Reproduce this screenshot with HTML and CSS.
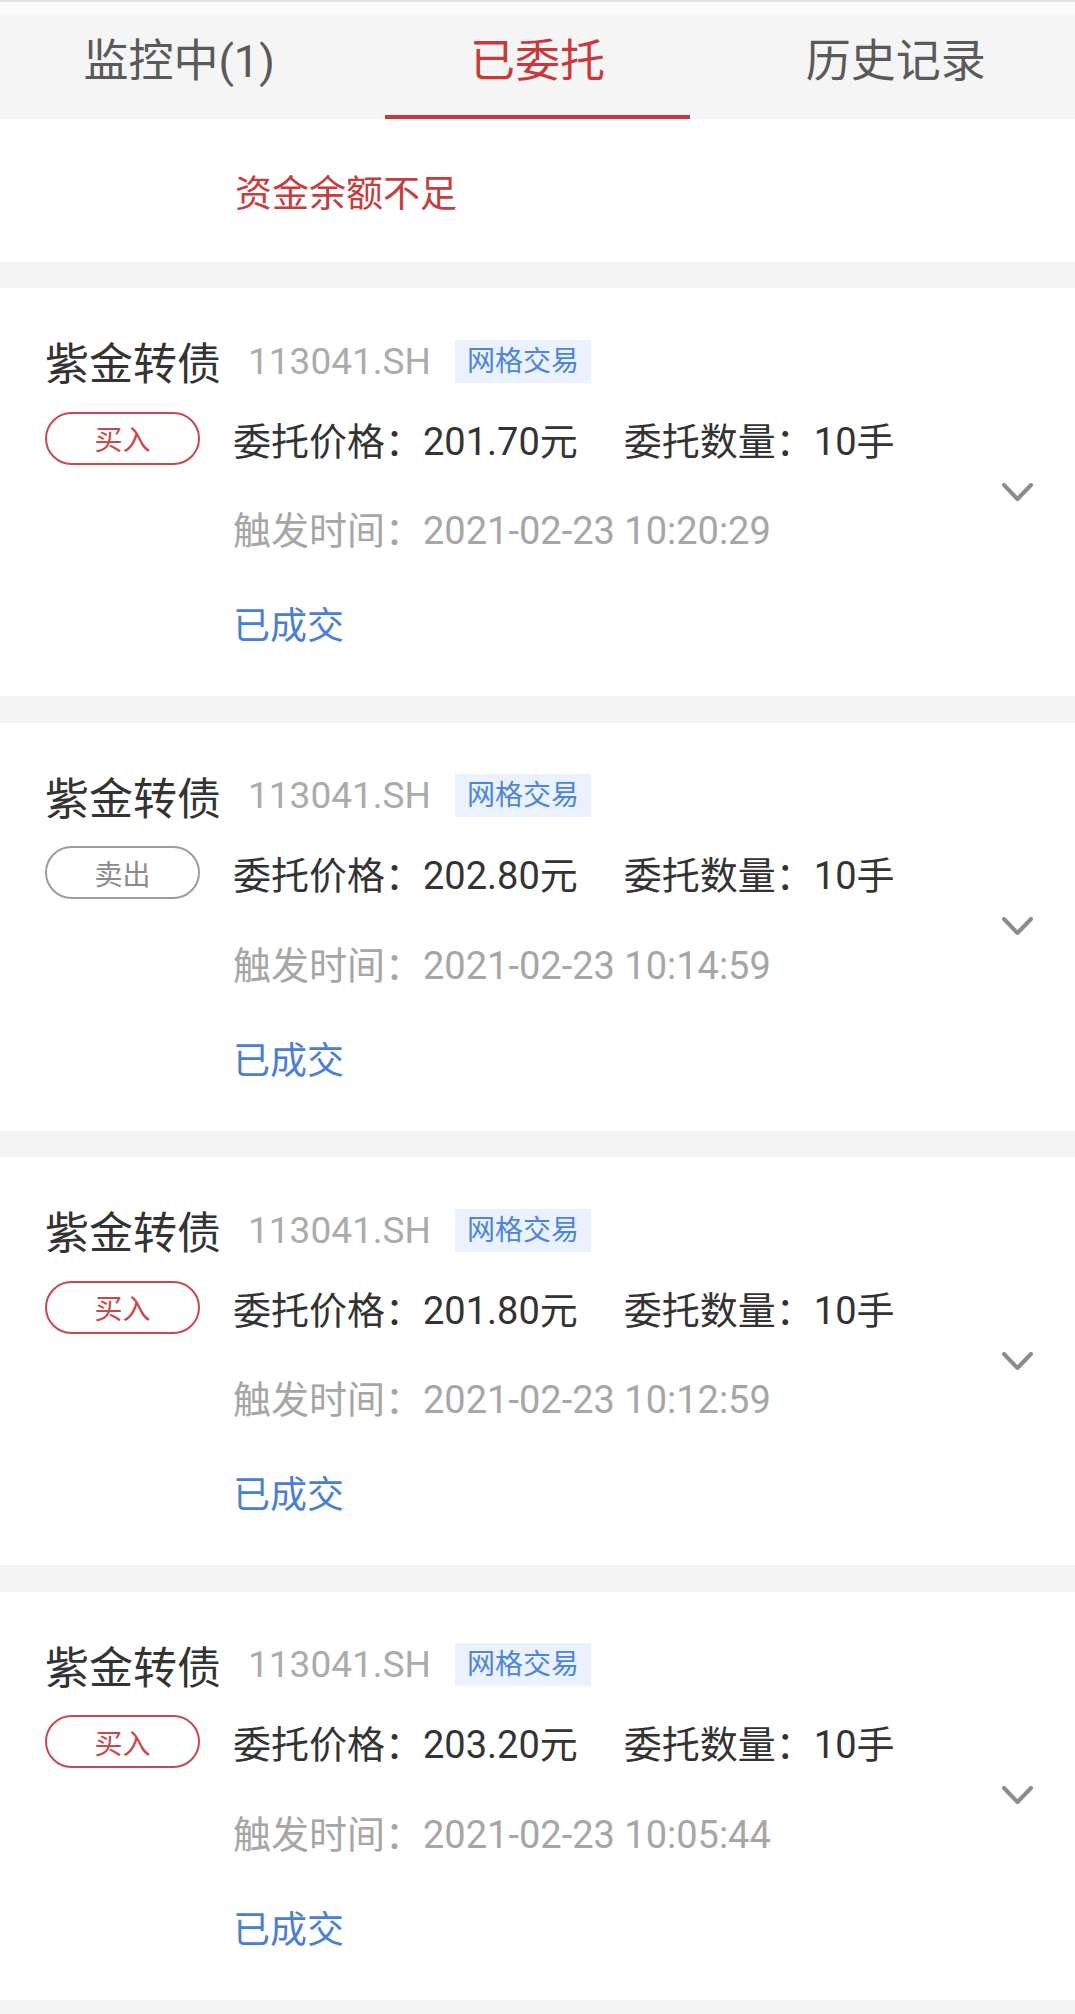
FILE: index.html
```html
<!DOCTYPE html>
<html lang="zh-CN">
<head>
<meta charset="utf-8">
<title>已委托</title>
<link rel="stylesheet" href="styles.css">
</head>
<body>
<nav class="tabs">
  <div class="tab"><span class="tab-label">监控中(1)</span><span class="tab-bar"></span></div>
  <div class="tab active"><span class="tab-label">已委托</span><span class="tab-bar"></span></div>
  <div class="tab"><span class="tab-label">历史记录</span><span class="tab-bar"></span></div>
</nav>

<section class="notice">资金余额不足</section>

<section class="card">
  <div class="card-body">
    <div class="row-title"><span class="name">紫金转债</span><span class="code">113041.SH</span><span class="tag">网格交易</span></div>
    <div class="row-price"><span class="pill buy">买入</span><span class="val">委托价格：201.70元</span><span class="val qty">委托数量：10手</span></div>
    <div class="row-time">触发时间：2021-02-23 10:20:29</div>
    <div class="row-status">已成交</div>
  </div>
  <svg class="chev" width="31" height="19" viewBox="0 0 31 19"><polyline points="2,2 15.5,16 29,2" fill="none" stroke="#8c8c8c" stroke-width="4" stroke-linecap="round" stroke-linejoin="round"/></svg>
</section>

<section class="card">
  <div class="card-body">
    <div class="row-title"><span class="name">紫金转债</span><span class="code">113041.SH</span><span class="tag">网格交易</span></div>
    <div class="row-price"><span class="pill sell">卖出</span><span class="val">委托价格：202.80元</span><span class="val qty">委托数量：10手</span></div>
    <div class="row-time">触发时间：2021-02-23 10:14:59</div>
    <div class="row-status">已成交</div>
  </div>
  <svg class="chev" width="31" height="19" viewBox="0 0 31 19"><polyline points="2,2 15.5,16 29,2" fill="none" stroke="#8c8c8c" stroke-width="4" stroke-linecap="round" stroke-linejoin="round"/></svg>
</section>

<section class="card">
  <div class="card-body">
    <div class="row-title"><span class="name">紫金转债</span><span class="code">113041.SH</span><span class="tag">网格交易</span></div>
    <div class="row-price"><span class="pill buy">买入</span><span class="val">委托价格：201.80元</span><span class="val qty">委托数量：10手</span></div>
    <div class="row-time">触发时间：2021-02-23 10:12:59</div>
    <div class="row-status">已成交</div>
  </div>
  <svg class="chev" width="31" height="19" viewBox="0 0 31 19"><polyline points="2,2 15.5,16 29,2" fill="none" stroke="#8c8c8c" stroke-width="4" stroke-linecap="round" stroke-linejoin="round"/></svg>
</section>

<section class="card">
  <div class="card-body">
    <div class="row-title"><span class="name">紫金转债</span><span class="code">113041.SH</span><span class="tag">网格交易</span></div>
    <div class="row-price"><span class="pill buy">买入</span><span class="val">委托价格：203.20元</span><span class="val qty">委托数量：10手</span></div>
    <div class="row-time">触发时间：2021-02-23 10:05:44</div>
    <div class="row-status">已成交</div>
  </div>
  <svg class="chev" width="31" height="19" viewBox="0 0 31 19"><polyline points="2,2 15.5,16 29,2" fill="none" stroke="#8c8c8c" stroke-width="4" stroke-linecap="round" stroke-linejoin="round"/></svg>
</section>
</body>
</html>
```

FILE: styles.css
```css
* { box-sizing: border-box; }

html, body {
  margin: 0;
  padding: 0;
}

body {
  background: #f4f4f4;
  font-family: Roboto, "Noto Sans CJK SC", sans-serif;
  color: #333;
}

/* Tabs */
.tabs {
  display: grid;
  grid-template-columns: 1fr 1fr 1fr;
  height: 119px;
  background: linear-gradient(#fbfbfb 0, #fbfbfb 12px, #f5f5f5 14px);
  border-top: 2px solid #e3e3e3;
}

.tab {
  display: flex;
  flex-direction: column;
  align-items: center;
}

.tab-label {
  margin-top: 20px;
  height: 80px;
  line-height: 80px;
  font-size: 45px;
  color: #5a5a5a;
}

.tab-bar {
  margin-top: auto;
  width: 305px;
  height: 4px;
}

.tab.active .tab-label { color: #c9393b; }
.tab.active .tab-bar { background: #c9393b; }

/* Notice */
.notice {
  height: 143px;
  background: #fff;
  display: flex;
  align-items: center;
  padding-left: 235px;
  font-size: 37px;
  color: #c73c3d;
  margin-bottom: 26px;
}

/* Cards */
.card {
  height: 408px;
  background: #fff;
  display: flex;
  padding: 0 42px 0 45px;
  margin-bottom: 26.6px;
}

.card-body {
  flex: 1;
  display: flex;
  flex-direction: column;
  padding-top: 33px;
}

.chev {
  align-self: center;
  flex: none;
}

.row-title {
  height: 80px;
  display: flex;
  align-items: center;
}

.name {
  font-size: 44px;
  color: #333;
}

.code {
  font-size: 37px;
  color: #ababab;
  margin-left: 27px;
}

.tag {
  margin-left: 24px;
  height: 43px;
  line-height: 43px;
  padding: 0 12px;
  background: #ebf2fd;
  color: #4d86d6;
  font-size: 28px;
}

.row-price {
  margin-top: 7px;
  height: 60px;
  display: flex;
  align-items: center;
}

.pill {
  width: 155px;
  height: 53px;
  border: 2px solid;
  border-radius: 27px;
  display: flex;
  align-items: center;
  justify-content: center;
  font-size: 28px;
  margin-right: 33px;
  flex: none;
}

.pill.buy { border-color: #c9484b; color: #c9484b; }
.pill.sell { border-color: #9c9c9c; color: #8a8a8a; }

.val {
  font-size: 38px;
  color: #333;
}

.val.qty { margin-left: 46px; }

.row-time {
  margin-top: 33px;
  height: 60px;
  line-height: 60px;
  padding-left: 188px;
  font-size: 38px;
  color: #a6a6a6;
}

.row-status {
  margin-top: 36px;
  height: 60px;
  line-height: 60px;
  padding-left: 188px;
  font-size: 37px;
  color: #4a80d3;
}
```
